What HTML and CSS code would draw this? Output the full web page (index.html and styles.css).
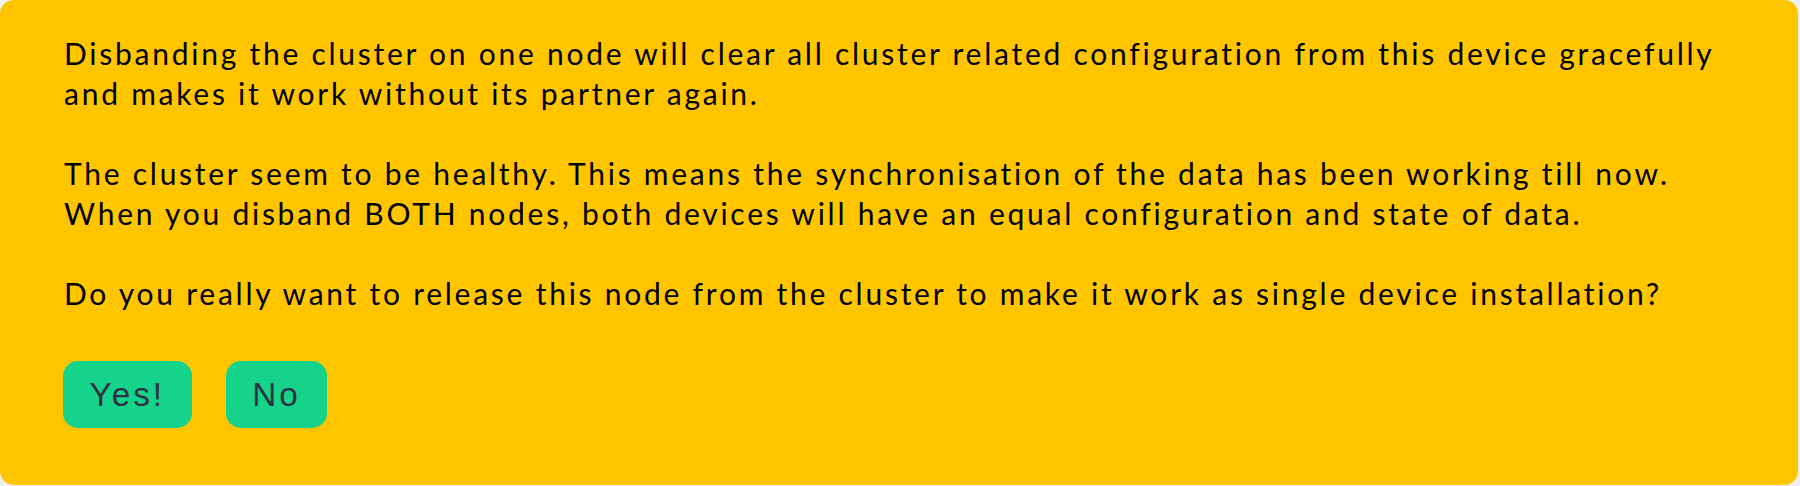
FILE: index.html
```html
<!DOCTYPE html>
<html>
<head>
<meta charset="utf-8">
<link rel="stylesheet" href="styles.css">
</head>
<body>
<div class="dialog">
  <div class="message">
    <p>Disbanding the cluster on one node will clear all cluster related configuration from this device gracefully<br>and makes it work without its partner again.</p>
    <p>The cluster seem to be healthy. This means the synchronisation of the data has been working till now.<br>When you disband BOTH nodes, both devices will have an equal configuration and state of data.</p>
    <p>Do you really want to release this node from the cluster to make it work as single device installation?</p>
  </div>
  <div class="buttons">
    <button class="btn">Yes!</button>
    <button class="btn">No</button>
  </div>
</div>
</body>
</html>
```
FILE: styles.css
```css
html, body {
  margin: 0;
  padding: 0;
  background: #f0f0f0;
}
.dialog {
  box-sizing: border-box;
  width: 1798px;
  height: 485px;
  background: #ffc600;
  border-radius: 14px;
  padding: 33px 0 0 64px;
}
.message {
  font-family: Lato, "Noto Sans", sans-serif;
  font-size: 30px;
  line-height: 40px;
  letter-spacing: 2.75px;
  color: #000;
  white-space: nowrap;
}
.message p {
  margin: 0 0 40px 0;
}
.message p:last-child {
  margin-bottom: 0;
}
.buttons {
  display: flex;
  gap: 34px;
  margin-top: 48px;
  margin-left: -1px;
}
.btn {
  font-family: "Liberation Sans", Arial, sans-serif;
  font-size: 33.33px;
  letter-spacing: 3px;
  color: #2d3142;
  background: #15d38a;
  border: none;
  border-radius: 15px;
  height: 67px;
  padding: 0 26.5px;
  margin: 0;
}
```
